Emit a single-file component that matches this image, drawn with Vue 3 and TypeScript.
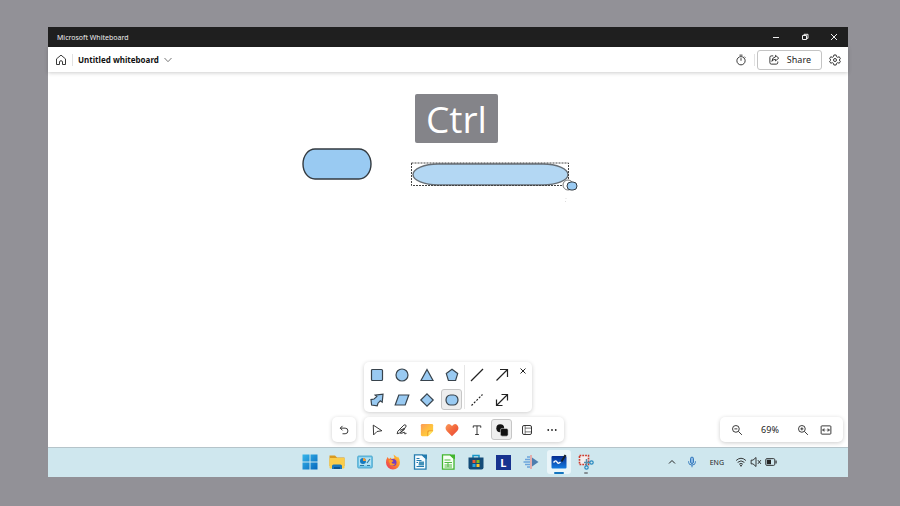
<script setup lang="ts">
import { ref } from 'vue'

interface Shape {
  name: string
  d: string
  filled: boolean
  dashed?: boolean
}

const shapeRows: Shape[][] = [
  [
    { name: 'Square', d: 'M3.5 2.5h9a1 1 0 0 1 1 1v9a1 1 0 0 1-1 1h-9a1 1 0 0 1-1-1v-9a1 1 0 0 1 1-1z', filled: true },
    { name: 'Circle', d: 'M8 2a6 6 0 0 1 0 12a6 6 0 0 1 0-12z', filled: true },
    { name: 'Triangle', d: 'M8 2.5L14 13.5H2z', filled: true },
    { name: 'Pentagon', d: 'M8 2.3L13.7 6.6L11.6 13.5H4.4L2.3 6.6z', filled: true },
    { name: 'Line', d: 'M2 14L14 2', filled: false },
    { name: 'Arrow', d: 'M2.5 13.5L13.5 2.5M6 2.5h7.5V10', filled: false },
  ],
  [
    { name: 'Block arrow', d: 'M6.2 3.2L14 2.2L13.2 10.2L11.3 8.8L9 11.2L8.2 13.8L2.6 13L2 7.6L5 7L7.8 4.6z', filled: true },
    { name: 'Parallelogram', d: 'M4.8 3h10L11.2 13H1.2z', filled: true },
    { name: 'Diamond', d: 'M8 1.8L14.2 8L8 14.2L1.8 8z', filled: true },
    { name: 'Pill', d: 'M6.5 3h3a4.5 5 0 0 1 0 10h-3a4.5 5 0 0 1 0-10z', filled: true },
    { name: 'Dashed line', d: 'M2.5 13.5L13.5 2.5', filled: false, dashed: true },
    { name: 'Double arrow', d: 'M2.5 13.5L13.5 2.5M7.5 2.5h6V8.5M2.5 7.5v6H8.5', filled: false },
  ],
]

const selectedShape = ref('Pill')
const zoom = ref(69)
</script>

<template>
  <div class="desktop">
    <div class="window">
      <div class="titlebar">
        <span>Microsoft Whiteboard</span>
        <div class="caption">
          <button aria-label="Minimize"><svg class="i10" viewBox="0 0 10 10"><path d="M2 5.5h6" /></svg></button>
          <button aria-label="Restore"><svg class="i10" viewBox="0 0 10 10"><path d="M2.5 3.5h4v4h-4zM4 3.5v-1.2h4v4H6.5" /></svg></button>
          <button aria-label="Close"><svg class="i10" viewBox="0 0 10 10"><path d="M2 2l6 6M8 2l-6 6" /></svg></button>
        </div>
      </div>

      <header class="header">
        <button aria-label="Home"><svg class="i12" viewBox="0 0 16 16"><path d="M2 6.5L8 1.5l6 5v7.5h-4v-3.5q0-1.5-2-1.5t-2 1.5V14h-4z" /></svg></button>
        <i class="rule"></i>
        <button class="board-name">
          <span>Untitled whiteboard</span>
          <svg class="i10" viewBox="0 0 10 10"><path d="M1.5 3L5 6.7L8.5 3" /></svg>
        </button>
        <div class="header-right">
          <button aria-label="Timer"><svg class="i12" viewBox="0 0 16 16"><circle cx="8" cy="9" r="5.5" /><path d="M6 1.5h4M8 5.5V9M12.5 3.5l1.3 1.3" /></svg></button>
          <i class="rule"></i>
          <button class="share">
            <svg class="i12" viewBox="0 0 16 16"><path d="M7 2.5H4.5q-2 0-2 2v7q0 2 2 2h6.5q2 0 2-2v-1.5M10 1.8L14.3 5.5L10 9.2V7.2Q6.5 7 5.2 9.8Q5.5 4.5 10 3.8z" /></svg>
            <span>Share</span>
          </button>
          <button aria-label="Settings"><svg class="i12" viewBox="0 0 16 16"><path d="M6.5 1.3h3l.5 2.2 1.5.9 2.2-.7 1.5 2.6L13.5 8l1.7 1.7-1.5 2.6-2.2-.7-1.5.9-.5 2.2h-3L6 12.5l-1.5-.9-2.2.7L.8 9.7 2.5 8 .8 6.3l1.5-2.6 2.2.7L6 3.5z" /><circle cx="8" cy="8" r="2" /></svg></button>
        </div>
      </header>

      <main class="canvas">
        <svg class="drawing" aria-label="Drawing">
          <rect class="shape" x="255" y="77" width="68" height="30" rx="12" ry="15" />
          <rect class="shape pale" x="365" y="92" width="155" height="21" rx="25" ry="11" />
          <rect class="selection" x="363.5" y="91" width="157" height="22.5" />
          <circle class="handle" cx="520" cy="113" r="5" />
          <rect class="shape mini" x="519" y="110" width="10" height="8" rx="4" />
          <path class="spark" d="M518 126v1M518 129l-1 1" />
        </svg>
        <div class="key-hint">Ctrl</div>

        <div class="dock">
          <div class="tools">
            <button class="card undo" aria-label="Undo"><svg class="i12" viewBox="0 0 16 16"><path d="M6 2.5L3 5.5l3 3M3 5.5h6.5a3.7 3.7 0 0 1 0 7.5H6" /></svg></button>
            <div class="stack">
              <div class="card palette">
                <div class="shape-grid">
                  <template v-for="row in shapeRows">
                    <button
                      v-for="s in row"
                      :key="s.name"
                      :aria-label="s.name"
                      :class="['tool', { selected: s.name === selectedShape }]"
                      @click="selectedShape = s.name"
                    >
                      <svg viewBox="0 0 16 16" :class="['glyph', { filled: s.filled, dashed: s.dashed }]"><path :d="s.d" /></svg>
                    </button>
                  </template>
                </div>
                <button class="close" aria-label="Close shapes"><svg class="i10" viewBox="0 0 10 10"><path d="M2.5 2.5l5 5M7.5 2.5l-5 5" /></svg></button>
              </div>
              <div class="card toolbar">
                <button class="tool" aria-label="Select"><svg class="i12" viewBox="0 0 16 16"><path d="M3 1.5l11.5 7.5-6.5 1L3.5 14.5z" /></svg></button>
                <button class="tool" aria-label="Inking"><svg class="i12" viewBox="0 0 16 16"><path d="M2.5 9.5L10.5 1.5q1.5-1 2.5 0t0 2.5L5 12L1.5 13zM5 8.5l6-2.5q1.5 0 0 1.5L6.5 11q-1.5 2 .5 1.5l4-1.5q1.5 0 .5 1.5t2.5 0" /></svg></button>
                <button class="tool" aria-label="Notes">
                  <svg class="i14" viewBox="0 0 16 16">
                    <defs><linearGradient id="note" x1="0" y1="0" x2="1" y2="1"><stop offset="0" stop-color="#fc9a58" /><stop offset=".5" stop-color="#ffc040" /><stop offset="1" stop-color="#ffda3d" /></linearGradient></defs>
                    <path class="plain" fill="url(#note)" d="M2.5 1h11Q15 1 15 2.5V9l-6 6H2.5Q1 15 1 13.5v-11Q1 1 2.5 1z" /><path class="plain" fill="#e98b25" d="M8.5 15v-5Q8.5 8.5 10 8.5h5z" /><path class="plain" fill="#ffe564" d="M9.5 15v-4q0-1.5 1.5-1.5h4z" />
                  </svg>
                </button>
                <button class="tool" aria-label="Reactions">
                  <svg class="i14" viewBox="0 0 16 16">
                    <defs><linearGradient id="heart" x1="0" y1="0" x2="1" y2="1"><stop offset="0" stop-color="#fa9b5b" /><stop offset=".5" stop-color="#f3683c" /><stop offset="1" stop-color="#e8463a" /></linearGradient></defs>
                    <path class="plain" fill="url(#heart)" d="M8 15L2 9Q-.5 6 1.5 3T6.5 2L8 3.5L9.5 2q3-2 5 1T14 9z" />
                  </svg>
                </button>
                <button class="tool" aria-label="Text"><svg class="i12" viewBox="0 0 16 16"><path d="M3 5V2.500h10V5M8 2.500v11.500M5.500 14h5" /></svg></button>
                <button class="tool selected" aria-label="Shapes"><svg class="i14" viewBox="0 0 16 16"><circle class="plain" fill="#111" cx="6" cy="6" r="4.5" /><rect x="6.2" y="6.2" width="8.8" height="8.8" rx="1.8" fill="#111" stroke="#eee" stroke-width=".6" /></svg></button>
                <button class="tool" aria-label="Templates"><svg class="i12" viewBox="0 0 16 16"><rect x="2" y="2" width="12" height="12" rx="2" /><path d="M5.500 2v12M5.500 5.500H14M5.500 10.500H14" stroke-width=".8" /></svg></button>
                <button class="tool" aria-label="More"><svg class="i12" viewBox="0 0 16 16"><circle class="plain" cx="3" cy="8" r="1.2" /><circle class="plain" cx="8" cy="8" r="1.2" /><circle class="plain" cx="13" cy="8" r="1.2" /></svg></button>
              </div>
            </div>
          </div>
          <div class="card zoom">
            <button aria-label="Zoom out" @click="zoom--"><svg class="i12" viewBox="0 0 16 16"><circle cx="6.5" cy="6.5" r="4.5" /><path d="M10 10l4.5 4.5M4.5 6.5h4" /></svg></button>
            <span class="zoom-value">{{ zoom }}%</span>
            <button aria-label="Zoom in" @click="zoom++"><svg class="i12" viewBox="0 0 16 16"><circle cx="6.5" cy="6.5" r="4.5" /><path d="M10 10l4.5 4.5M4.5 6.5h4M6.5 4.5v4" /></svg></button>
            <button aria-label="Fit to screen"><svg class="i12" viewBox="0 0 16 16"><rect x="1.5" y="2.5" width="13" height="11" rx="1" /><path d="M3.5 8H7M9 8h3.5M5.5 6L3.5 8l2 2M10.5 6l2 2-2 2" /></svg></button>
          </div>
        </div>
      </main>

      <footer class="taskbar">
        <nav class="apps">
          <button aria-label="Start"><svg class="i16" viewBox="0 0 16 16"><defs><linearGradient id="win" x1="0" y1="0" x2="1" y2="1"><stop offset="0" stop-color="#38b6ea" /><stop offset="1" stop-color="#0668bd" /></linearGradient></defs><path class="plain" fill="url(#win)" d="M.5.5h7v7h-7zM8.500.5h7v7h-7zM.5 8.500h7v7h-7zM8.500 8.500h7v7h-7z" /></svg></button>
          <button aria-label="File Explorer"><svg class="i16" viewBox="0 0 16 16"><path class="plain" fill="#d99a20" d="M.5 1.5h5.5l2 2h7.5V12H.5z" /><path class="plain" fill="#fbcd4b" d="M.5 4h15v9.5q0 1-1 1h-13q-1 0-1-1z" /><path class="plain" fill="#1976bd" d="M3 15v-3q0-1.5 1.5-1.5h7q1.5 0 1.5 1.5v3z" /><path class="plain" fill="#0d538d" d="M5 13h6v2H5z" /></svg></button>
          <button aria-label="Control Panel"><svg class="i16" viewBox="0 0 16 16"><rect x=".7" y="2" width="14.6" height="12" rx="1" fill="#73c5e9" stroke="#3e9fc7" stroke-width=".8" /><path class="plain" fill="#b4e2f3" d="M2 3.5h12v8H2z" /><circle class="plain" fill="#1679bd" cx="6" cy="7" r="3" /><path class="plain" fill="#f49c35" d="M6 7V4a3 3 0 0 1 3 3z" /><path stroke="#2e7ba2" d="M10 9l3-4M10 11.5h3M3 11.5h4" /></svg></button>
          <button aria-label="Firefox"><svg class="i16" viewBox="0 0 16 16"><defs><linearGradient id="fox" x1="1" y1="0" x2="0" y2="1"><stop offset="0" stop-color="#ffd83c" /><stop offset=".45" stop-color="#ff8b28" /><stop offset="1" stop-color="#e82b62" /></linearGradient></defs><path class="plain" fill="url(#fox)" d="M2.5 3L4 5l2-1.5L6.5 5l3-1-1-3.5 4 3 .5-1q2 2.5 2 6a7 7 0 0 1-14 0q0-3 1.500-5.500z" /><circle class="plain" fill="#713cc5" cx="8" cy="8.5" r="3.5" /><path class="plain" fill="#ff9b27" d="M3.500 6.500q3-1.500 5 .5L6.500 8.500q1 2 4 1Q8 13 5 11z" /></svg></button>
          <button aria-label="LibreOffice Writer"><svg class="i16" viewBox="0 0 16 16"><path d="M2.500.8H10L14 4.500v10.700H2.500z" fill="#f6fcff" stroke="#227bae" stroke-width="1.3" /><path class="plain" fill="#227bae" d="M9.500.5H15v5z" /><path stroke="#227bae" d="M4.500 4.500h3M4.500 6.500h5M4.500 8.500H6M4.500 12.500h7.500" /><path class="plain" fill="#4391b8" d="M7 7.500h5v4H6.500z" /></svg></button>
          <button aria-label="LibreOffice Calc"><svg class="i16" viewBox="0 0 16 16"><path d="M2.500.8H10L14 4.500v10.700H2.500z" fill="#f6fff3" stroke="#42b52e" stroke-width="1.3" /><path class="plain" fill="#42b52e" d="M9.500.5H15v5z" /><path stroke="#53b943" stroke-width="1" d="M4.500 6h6M4.500 8.500h7.500M4.500 11h7.500M4.500 13h7.500M8 8.500V13" /></svg></button>
          <button aria-label="Microsoft Store"><svg class="i16" viewBox="0 0 16 16"><path d="M5 4V1.500h6V4" stroke="#1696c9" stroke-width="1.5" /><path class="plain" fill="#144c78" d="M.5 3.500h15v10q0 2-2 2h-11q-2 0-2-2z" /><path class="plain" fill="#ed5935" d="M4.500 6h3v3h-3z" /><path class="plain" fill="#82bc22" d="M8.500 6h3v3h-3z" /><path class="plain" fill="#25a6e3" d="M4.500 10h3v3h-3z" /><path class="plain" fill="#ffc329" d="M8.500 10h3v3h-3z" /></svg></button>
          <button aria-label="L app"><span class="letter-app">L</span></button>
          <button aria-label="Media tool"><svg class="i16" viewBox="0 0 16 16"><path stroke="#6ca5dc" stroke-width="1.3" d="M2 5.500h5M.5 8H7M2 10.500h5M4 3h3M4 13h3" /><path stroke="#ef8782" d="M8 1v14" /><path class="plain" fill="#4d7daf" d="M9 3.500L15.500 8 9 12.500z" /></svg></button>
          <button class="running active" aria-label="Whiteboard"><svg class="i16" viewBox="0 0 16 16"><defs><linearGradient id="board" x1="0" y1="0" x2="0" y2="1"><stop offset="0" stop-color="#082c91" /><stop offset="1" stop-color="#147be0" /></linearGradient></defs><rect class="plain" fill="url(#board)" x=".5" y="2" width="15" height="12.5" rx="1" /><path stroke="#fff" stroke-width="1.4" d="M2.500 8.500q2.500-3 3.500-.5t3.500 0" /><path stroke="#15202c" stroke-width="2" d="M10.500 7.500L14.500 1" /></svg></button>
          <button class="running" aria-label="Snipping Tool"><svg class="i16" viewBox="0 0 16 16"><rect fill="#f5eeee" x="1.5" y="1.5" width="9" height="9" stroke="#cc3b2e" stroke-width="1.6" stroke-dasharray="1.8 1" /><path stroke="#548fac" stroke-width="1.5" d="M8.500 5v7M6 8.500h6" /><g stroke="#2788bf" stroke-width="1.2"><circle cx="13.5" cy="8.5" r="1.7" /><circle cx="8.5" cy="13.5" r="1.7" /></g></svg></button>
        </nav>
        <div class="tray">
          <button aria-label="Show hidden icons"><svg class="i10" viewBox="0 0 10 10"><path d="M2 6.500L5 3.500l3 3" /></svg></button>
          <button class="mic" aria-label="Microphone"><svg class="i12" viewBox="0 0 16 16"><rect x="6" y="1.5" width="4" height="8.5" rx="2" fill="#8bb9e5" /><path d="M3.500 7v1.500q0 3.500 4.500 3.500t4.500-3.500V7M8 12v3" /></svg></button>
          <span class="lang">ENG</span>
          <div class="status">
            <svg class="i12" viewBox="0 0 16 16"><path d="M1.500 6Q8 0 14.500 6M3.500 8.500q4.500-4 9 0M5.500 11q2.500-2.300 5 0" /><circle class="plain" cx="8" cy="12.8" r="1.2" /></svg>
            <svg class="i12" viewBox="0 0 16 16"><path d="M1.500 5.500H4L8 2v12L4 10.500H1.500zM10.500 5.500l4 5M14.500 5.500l-4 5" /></svg>
            <svg class="i12" viewBox="0 0 16 16"><rect x="1" y="3.5" width="12" height="9" rx="1.5" /><path class="plain" d="M2.500 5h5.500v6H2.500zM14 6h1.500v4H14z" /></svg>
          </div>
        </div>
      </footer>
    </div>
  </div>
</template>

<style>
body { margin: 0; }
</style>

<style scoped>
* { box-sizing: border-box; }
.desktop {
  min-height: 100vh;
  display: flex;
  padding: 27px 52px 29px 48px;
  background: #929197;
  font-family: "Noto Sans", "Open Sans", sans-serif;
  font-size: 9px;
  color: #242424;
}
.window { flex: 1; display: flex; flex-direction: column; background: #fff; }
button {
  display: flex;
  align-items: center;
  justify-content: center;
  margin: 0;
  padding: 0;
  border: 0;
  background: none;
  font: inherit;
  color: inherit;
}
svg { display: block; flex: none; fill: none; stroke: currentColor; stroke-width: 1.2; }
.plain { stroke: none; }
.plain:not([fill]) { fill: currentColor; }
.i10 { width: 10px; height: 10px; stroke-width: 1; }
.i12 { width: 12px; height: 12px; }
.i14 { width: 14px; height: 14px; }
.i16 { width: 16px; height: 16px; }

.titlebar {
  height: 20px;
  display: flex;
  align-items: center;
  justify-content: space-between;
  padding: 0 9px;
  background: #1f1f1f;
  color: #eee;
  font-size: 7px;
}
.caption { display: flex; gap: 19px; }

.header {
  height: 25px;
  display: flex;
  align-items: center;
  gap: 5px;
  padding: 0 7px;
  background: #fff;
  box-shadow: 0 1px 4px #0003;
  z-index: 1;
}
.rule { width: 1px; height: 12px; background: #e2e2e2; }
.board-name { gap: 4px; font-size: 8px; font-weight: 700; color: #111; }
.board-name svg { color: #777; }
.header-right { display: flex; align-items: center; gap: 7px; margin-left: auto; }
.header-right .rule { margin-right: -5px; }
.share {
  height: 20px;
  gap: 7px;
  padding: 0 10px;
  border: 1px solid #c4c4c4;
  border-radius: 3px;
}

.canvas { flex: 1; position: relative; display: flex; align-items: flex-end; }
.drawing { position: absolute; left: 0; top: 0; width: 100%; height: 100%; }
.shape { fill: #99caf2; stroke: #333a40; stroke-width: 1.4; }
.shape.pale { fill: #b3d7f3; stroke: #666e75; }
.shape.mini { stroke-width: 1; }
.selection { stroke: #444; stroke-width: 1; stroke-dasharray: 2 1; }
.handle { fill: #fff; stroke: #777; stroke-width: 1; }
.spark { stroke: #ddd; stroke-width: 1; }
.key-hint {
  position: absolute;
  left: 367px;
  top: 22px;
  padding: 0 11px;
  border-radius: 2px;
  background: #848489;
  color: #fff;
  font-family: "Open Sans", "Noto Sans", sans-serif;
  font-size: 37px;
  line-height: 49px;
}

.dock {
  flex: 1;
  position: relative;
  display: grid;
  grid-template-columns: 1fr auto 1fr;
  align-items: end;
  padding: 5px;
}
.tools { grid-column: 2; display: flex; align-items: flex-end; gap: 8px; }
.card { background: #fff; border-radius: 5px; box-shadow: 0 1px 4px #0003; }
.undo { width: 24px; height: 25px; }
.stack { display: flex; flex-direction: column; align-items: flex-start; gap: 5px; }
.palette { display: flex; align-items: flex-start; }
.shape-grid {
  display: grid;
  grid-template-columns: repeat(6, 25px);
  background: linear-gradient(#e6e6e6, #e6e6e6) 100px 50% / 1px 44px no-repeat;
}
.tool { width: 25px; height: 25px; }
.tool.selected { background: #eee; border: 1px solid #c6c6c6; border-radius: 3px; width: 21px; height: 21px; margin: 2px; }
.glyph { width: 16px; height: 16px; stroke: #222; stroke-width: 1.2; }
.glyph.filled { fill: #99caf2; stroke: #38434c; }
.glyph.dashed { stroke-dasharray: 2 1.5; }
.close { width: 18px; height: 18px; }
.toolbar { display: flex; }
.zoom {
  grid-column: 3;
  justify-self: end;
  height: 25px;
  display: flex;
  align-items: center;
  padding: 0 11px;
}
.zoom-value { width: 54px; text-align: center; }
.zoom button + button { margin-left: 11px; }

.taskbar {
  height: 30px;
  display: grid;
  grid-template-columns: 1fr 304px 1fr;
  align-items: center;
  background: #cfe7ee;
  box-shadow: inset 0 1px #b5c4ca;
}
.apps { grid-column: 2; display: grid; grid-template-columns: repeat(11, 1fr); justify-items: center; }
.apps button { position: relative; width: 24px; height: 24px; }
.apps .active { background: #eaf5f9; border-radius: 3px; }
.running::after {
  content: "";
  position: absolute;
  bottom: 0;
  width: 4px;
  height: 2px;
  border-radius: 1px;
  background: #858f94;
}
.running.active::after { width: 10px; background: #1475bf; }
.letter-app {
  width: 15px;
  background: #17338f;
  color: #fff;
  font-size: 11px;
  font-weight: 700;
  line-height: 15px;
}
.tray { justify-self: end; display: flex; align-items: center; gap: 12px; padding-right: 71px; }
.mic { color: #2870b8; margin-left: -3px; }
.lang { font-size: 7px; }
.status { display: flex; gap: 3px; margin-left: -1px; }
</style>
